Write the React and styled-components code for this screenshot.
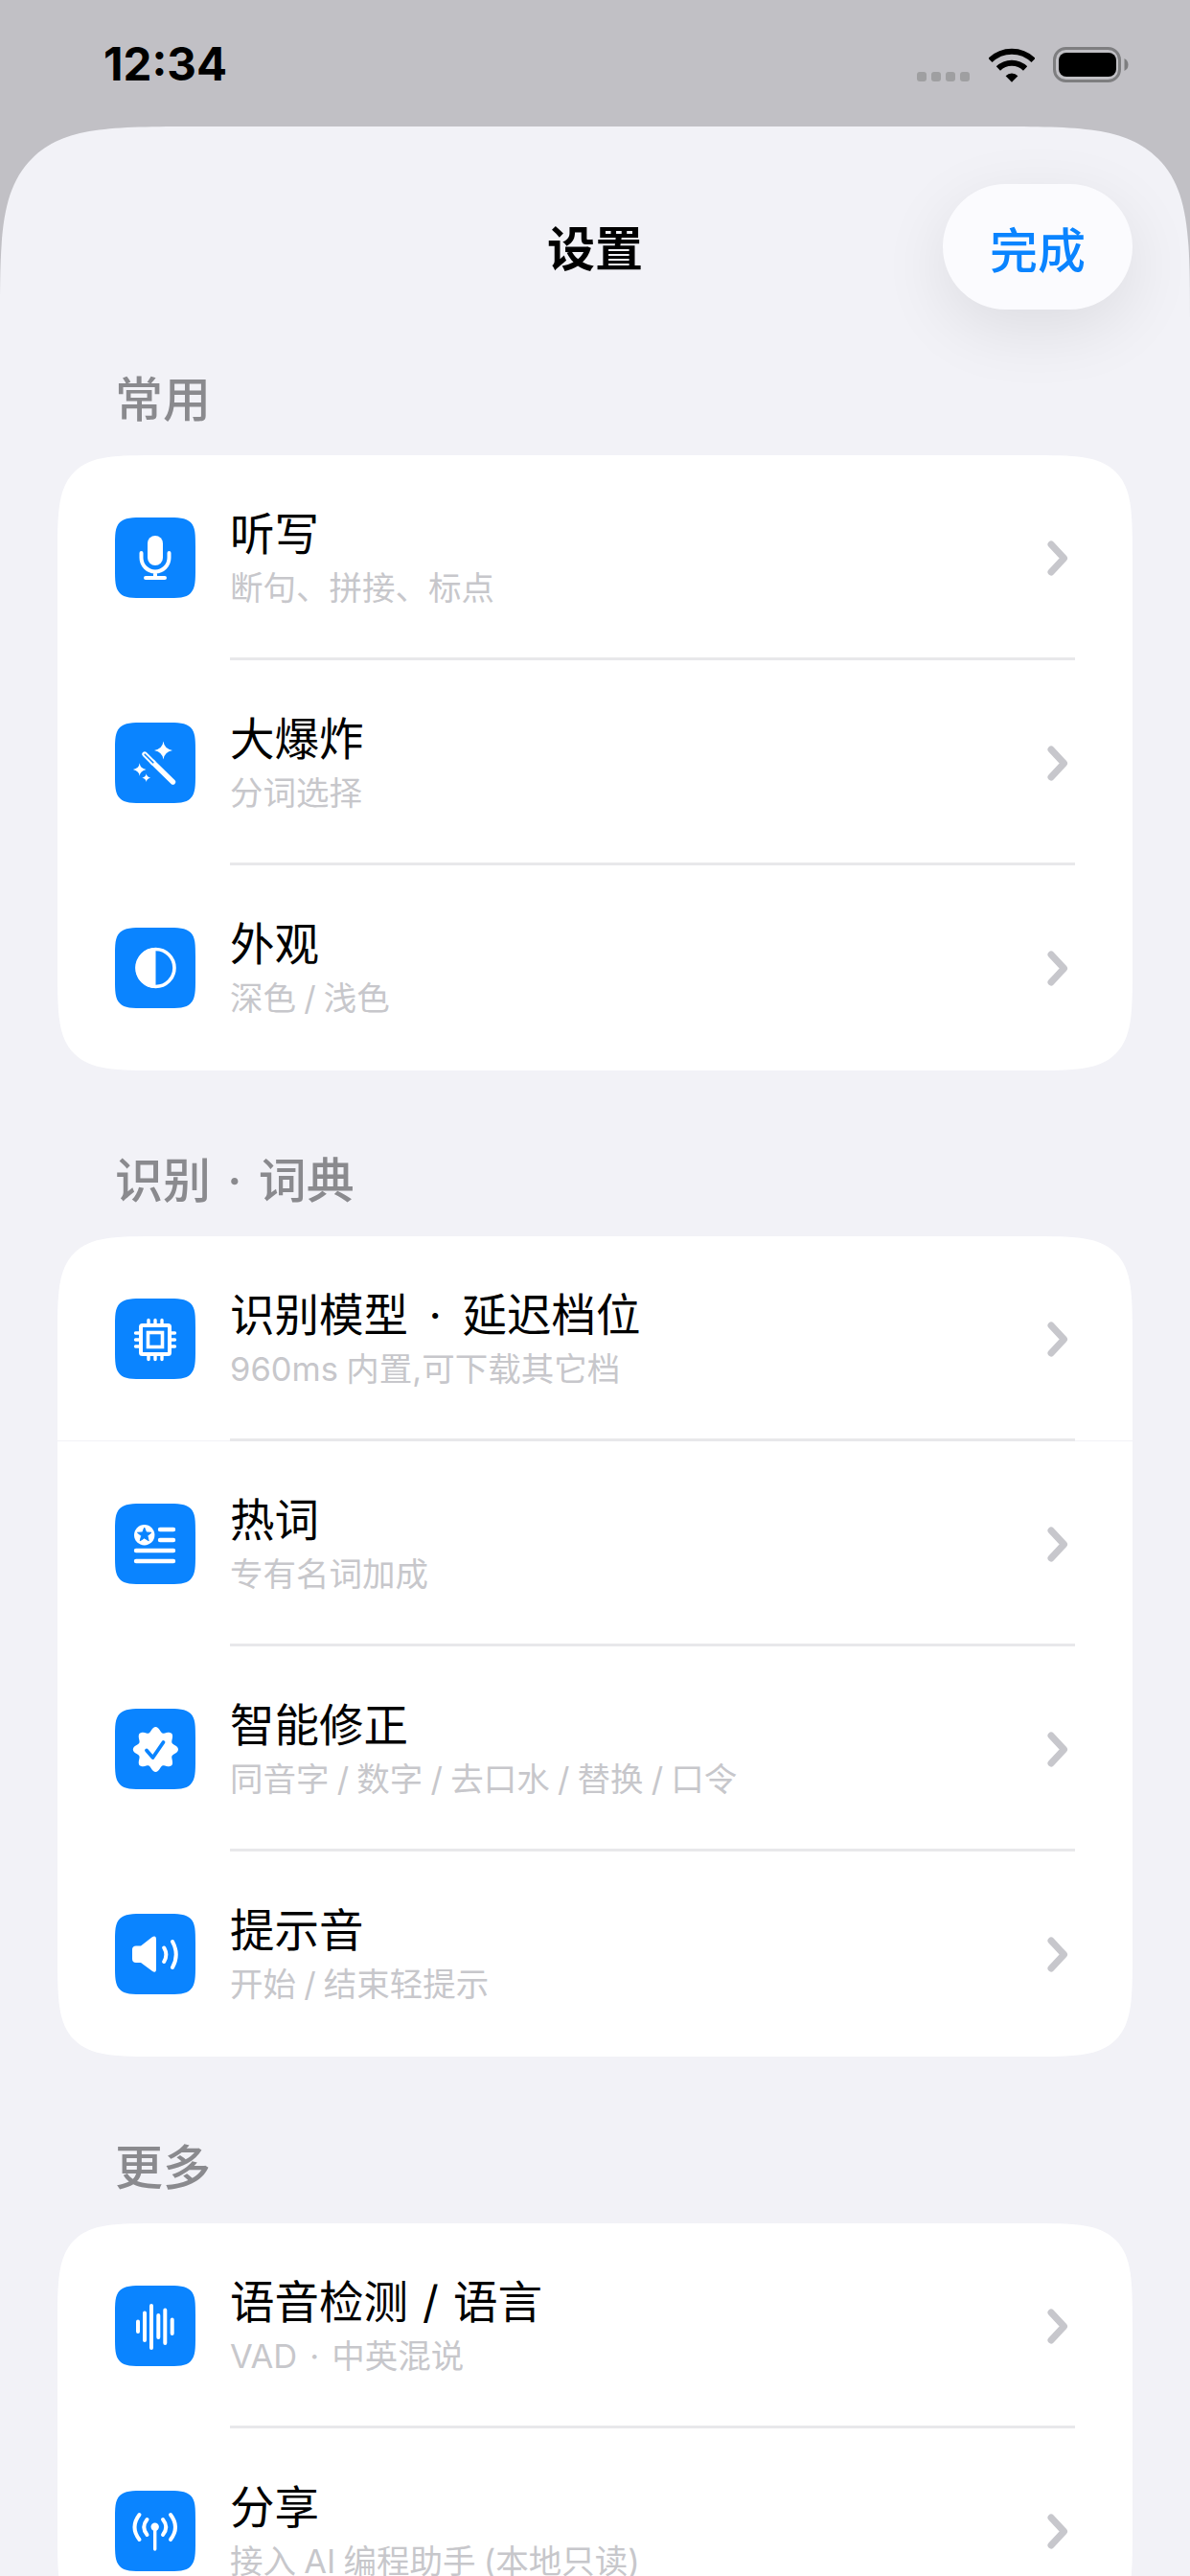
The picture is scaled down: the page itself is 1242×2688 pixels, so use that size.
import React from "react";
import styled, { createGlobalStyle } from "styled-components";

const FONT = `Inter, "Noto Sans CJK SC", "Noto Sans", sans-serif`;
const BLUE = "#0a84ff";

const Global = createGlobalStyle`
  html, body { margin: 0; padding: 0; background: #c1c0c5; }
  * { box-sizing: border-box; }
`;

const Page = styled.div`
  width: 1242px;
  height: 2688px;
  overflow: hidden;
  background: #c1c0c5;
  font-family: ${FONT};
  display: flex;
  flex-direction: column;
`;

const StatusBar = styled.div`
  flex: 0 0 132px;
  display: flex;
  justify-content: space-between;
  align-items: flex-start;
  padding: 49px 64px 0 108px;
`;

const Time = styled.div`
  font-size: 47.5px;
  font-weight: 700;
  line-height: 36px;
  color: #000;
`;

const StatusIcons = styled.div`
  display: flex;
  align-items: flex-end;
`;

const SignalDots = styled.div`
  display: flex;
  gap: 5px;
  margin-right: 20px;
  margin-bottom: 1px;
`;

const SignalDot = styled.span`
  width: 10px;
  height: 10px;
  border-radius: 3px;
  background: #9f9fa1;
`;

const Wifi = styled.svg`
  display: block;
  width: 48px;
  height: 36px;
  margin-right: 19px;
`;

const Battery = styled.svg`
  display: block;
  width: 79px;
  height: 37px;
`;

const Sheet = styled.div`
  flex: 1;
  min-height: 0;
  overflow: hidden;
  background: #f2f2f7;
  border-radius: 210px 210px 0 0;
  corner-shape: squircle;
  padding: 60px 60px 0;
`;

const Header = styled.header`
  position: relative;
  height: 131px;
  display: flex;
  align-items: center;
  justify-content: center;
`;

const Title = styled.h1`
  margin: 4px 0 0;
  font-size: 50px;
  font-weight: 600;
  line-height: 60px;
  color: #000;
`;

const DoneButton = styled.button`
  position: absolute;
  right: 0;
  top: 0;
  width: 198px;
  height: 131px;
  border: 0;
  border-radius: 66px;
  background: #fbfbfe;
  box-shadow: 0 20px 70px rgba(0, 0, 0, 0.09);
  font-family: ${FONT};
  font-size: 50px;
  font-weight: 500;
  color: ${BLUE};
  padding: 0;
`;

const Section = styled.section`
  margin-top: ${(p) => p.$gap}px;
`;

const SectionLabel = styled.h2`
  margin: 0 0 30px 60px;
  height: 60px;
  font-size: 50px;
  font-weight: 500;
  line-height: 64px;
  word-spacing: -3px;
  color: #8a8a8e;
`;

const Card = styled.div`
  background: #fff;
  border-radius: 110px;
  corner-shape: squircle;
  overflow: hidden;
`;

const Row = styled.div`
  height: 214px;
  display: flex;
  align-items: stretch;
  padding-left: 60px;
  box-shadow: ${(p) => (p.$seam ? "inset 0 -1px 0 #f2f2f7" : "none")};
`;

const IconTile = styled.div`
  flex: 0 0 84px;
  width: 84px;
  height: 84px;
  margin-top: 65px;
  margin-right: 36px;
  background: ${BLUE};
  border-radius: 32px;
  corner-shape: squircle;
`;

const Glyph = styled.svg`
  display: block;
  width: 84px;
  height: 84px;
`;

const RowBody = styled.div`
  flex: 1;
  min-width: 0;
  margin-right: 60px;
  display: flex;
  align-items: center;
  justify-content: space-between;
  border-bottom: 3px solid ${(p) => (p.$last ? "transparent" : "#e8e8ea")};
`;

const TextBlock = styled.div`
  display: flex;
  flex-direction: column;
  gap: 5px;
  margin-top: 6px;
`;

const RowTitle = styled.div`
  font-size: 46.5px;
  font-weight: 400;
  line-height: 56px;
  word-spacing: 2px;
  color: #000;
  white-space: nowrap;
`;

const RowSub = styled.div`
  font-size: 34.5px;
  font-weight: 400;
  line-height: 48px;
  word-spacing: -1.5px;
  color: #c7c7cb;
  white-space: nowrap;
`;

const MidDot = styled.span`
  margin: 0 0.14em;
`;

const Chevron = styled.svg`
  display: block;
  flex: none;
  width: 29px;
  height: 44px;
`;

const W = { fill: "none", stroke: "#fff", strokeLinecap: "round", strokeLinejoin: "round" };

const scallopPath = (() => {
  const n = 120;
  let d = "";
  for (let i = 0; i < n; i++) {
    const a = (i / n) * Math.PI * 2;
    const r = 21 + 2.6 * Math.cos(8 * a);
    d += `${i ? "L" : "M"}${(42.4 + r * Math.cos(a)).toFixed(2)} ${(42.5 + r * Math.sin(a)).toFixed(2)}`;
  }
  return d + "Z";
})();

const starPath = (cx, cy, R, r) => {
  let d = "";
  for (let i = 0; i < 10; i++) {
    const a = -Math.PI / 2 + (i * Math.PI) / 5;
    const q = i % 2 ? r : R;
    d += `${i ? "L" : "M"}${(cx + q * Math.cos(a)).toFixed(2)} ${(cy + q * Math.sin(a)).toFixed(2)}`;
  }
  return d + "Z";
};

const sparkle = (cx, cy, r) => {
  const k = r * 0.2;
  return `M${cx} ${cy - r}Q${cx + k * 0.4} ${cy - k} ${cx + r} ${cy}Q${cx + k * 0.4} ${cy + k} ${cx} ${cy + r}Q${cx - k * 0.4} ${cy + k} ${cx - r} ${cy}Q${cx - k * 0.4} ${cy - k} ${cx} ${cy - r}Z`;
};

const withDots = (text) => {
  const parts = text.split("·");
  if (parts.length < 2) return text;
  return (
    <>
      {parts[0]}
      <MidDot>·</MidDot>
      {parts[1]}
    </>
  );
};

const glyphs = {
  mic: (
    <>
      <rect x="34" y="19" width="16" height="31" rx="8" fill="#fff" />
      <path d="M27.5 37v5a14.5 14.5 0 0 0 29 0v-5M42 57v5M32 63h20" {...W} strokeWidth="4" />
    </>
  ),
  wand: (
    <>
      <path d="M39 41 60.5 62" {...W} strokeWidth="5.4" />
      <path d="M31 33 40 42" {...W} strokeWidth="5.4" />
      <path d="M31.2 33.2 39.8 41.8" fill="none" stroke={BLUE} strokeWidth="1.6" strokeLinecap="round" />
      <path d={sparkle(50.5, 29, 9.5)} fill="#fff" />
      <path d={sparkle(25.7, 49, 6.8)} fill="#fff" />
      <path d={sparkle(32.7, 57.7, 4.4)} fill="#fff" />
    </>
  ),
  contrast: (
    <>
      <circle cx="42.5" cy="42" r="19.5" fill="none" stroke="#fff" strokeWidth="3.6" />
      <path d="M42.5 21a21 21 0 0 0 0 42Z" fill="#fff" />
    </>
  ),
  chip: (
    <>
      <rect x="27" y="28" width="30" height="30" rx="1.5" fill="none" stroke="#fff" strokeWidth="4" />
      <rect x="34.5" y="35.5" width="15" height="15" fill="none" stroke="#fff" strokeWidth="3.6" />
      <path
        d="M35 22.5V26M42 22.5V26M49 22.5V26M35 60V63.5M42 60V63.5M49 60V63.5M21.5 36H25M21.5 43H25M21.5 50H25M59 36H62.5M59 43H62.5M59 50H62.5"
        {...W}
        strokeWidth="3.4"
      />
    </>
  ),
  card: (
    <>
      <circle cx="30.7" cy="32.7" r="10.7" fill="#fff" />
      <path d={starPath(30.7, 32.6, 7.6, 3.3)} fill={BLUE} stroke={BLUE} strokeWidth="1" strokeLinejoin="round" />
      <path d="M47 27H61M47 38H61M22 49H61M22 60H61" {...W} strokeWidth="4.4" />
    </>
  ),
  badge: (
    <>
      <path d={scallopPath} fill="#fff" />
      <path d="M33 43.5 39.5 51 50.5 35" fill="none" stroke={BLUE} strokeWidth="3.8" strokeLinecap="round" strokeLinejoin="round" />
    </>
  ),
  speaker: (
    <>
      <path
        d="M22 33.5H27L38.5 24.5Q43 21.8 43 27V57.5Q43 62.8 38.5 59.5L27 51H22Q18 51 18 47V37.5Q18 33.5 22 33.5Z"
        fill="#fff"
      />
      <path d="M51.2 35.5Q55.5 42.5 51.2 50M60 29Q67.5 42.5 60 56" {...W} strokeWidth="4" />
    </>
  ),
  wave: (
    <path
      d="M24 37.5V48M31 28.5V57M38 21V65M45.3 31V54M52.3 25.5V60M59.7 35.5V50"
      {...W}
      strokeWidth="4"
    />
  ),
  antenna: (
    <>
      <circle cx="41.7" cy="37.7" r="4.2" fill="#fff" />
      <path d="M41.7 38V61" {...W} strokeWidth="3.4" />
      <path d="M33.5 30Q27 38 33.5 46M50 30Q56.5 38 50 46M25.5 25Q15.5 38 25.5 51M58 25Q68 38 58 51" {...W} strokeWidth="4" />
    </>
  ),
};

const sections = [
  {
    label: "常用",
    gap: 62,
    rows: [
      { icon: "mic", title: "听写", sub: "断句、拼接、标点" },
      { icon: "wand", title: "大爆炸", sub: "分词选择" },
      { icon: "contrast", title: "外观", sub: "深色 / 浅色" },
    ],
  },
  {
    label: "识别 · 词典",
    gap: 83,
    rows: [
      { icon: "chip", title: "识别模型 · 延迟档位", sub: "960ms 内置,可下载其它档", seam: true },
      { icon: "card", title: "热词", sub: "专有名词加成" },
      { icon: "badge", title: "智能修正", sub: "同音字 / 数字 / 去口水 / 替换 / 口令" },
      { icon: "speaker", title: "提示音", sub: "开始 / 结束轻提示" },
    ],
  },
  {
    label: "更多",
    gap: 84,
    rows: [
      { icon: "wave", title: "语音检测 / 语言", sub: "VAD · 中英混说" },
      { icon: "antenna", title: "分享", sub: "接入 AI 编程助手 (本地只读)" },
    ],
  },
];

function SettingsRow({ row, last }) {
  return (
    <Row $seam={row.seam}>
      <IconTile>
        <Glyph viewBox="0 0 84 84">{glyphs[row.icon]}</Glyph>
      </IconTile>
      <RowBody $last={last}>
        <TextBlock>
          <RowTitle>{withDots(row.title)}</RowTitle>
          <RowSub>{withDots(row.sub)}</RowSub>
        </TextBlock>
        <Chevron viewBox="0 0 29 44">
          <path d="M4 9 L17.5 23.5 L4 38" fill="none" stroke="#c7c7cc" strokeWidth="7" strokeLinecap="round" strokeLinejoin="round" />
        </Chevron>
      </RowBody>
    </Row>
  );
}

export default function App() {
  return (
    <Page>
      <Global />
      <StatusBar>
        <Time>12:34</Time>
        <StatusIcons>
          <SignalDots>
            <SignalDot />
            <SignalDot />
            <SignalDot />
            <SignalDot />
          </SignalDots>
          <Wifi viewBox="0 0 48 36">
            <path d="M1.4 13A32 32 0 0 1 46.6 13" fill="none" stroke="#000" strokeWidth="6" />
            <path d="M9.9 21.5A20 20 0 0 1 38.1 21.5" fill="none" stroke="#000" strokeWidth="6" />
            <path d="M24 35.7 17.6 29.2A9 9 0 0 1 30.4 29.2Z" fill="#000" />
          </Wifi>
          <Battery viewBox="0 0 79 37">
            <rect x="1.5" y="1.5" width="68" height="34" rx="12" fill="none" stroke="#7e7e80" strokeWidth="3" />
            <rect x="6" y="6" width="60" height="25" rx="8" fill="#000" />
            <path d="M74.5 12Q78.5 14 78.5 18.5T74.5 25Z" fill="#7e7e80" />
          </Battery>
        </StatusIcons>
      </StatusBar>
      <Sheet>
        <Header>
          <Title>设置</Title>
          <DoneButton>完成</DoneButton>
        </Header>
        {sections.map((s) => (
          <Section key={s.label} $gap={s.gap}>
            <SectionLabel>{withDots(s.label)}</SectionLabel>
            <Card>
              {s.rows.map((r, i) => (
                <SettingsRow key={r.title} row={r} last={i === s.rows.length - 1} />
              ))}
            </Card>
          </Section>
        ))}
      </Sheet>
    </Page>
  );
}
